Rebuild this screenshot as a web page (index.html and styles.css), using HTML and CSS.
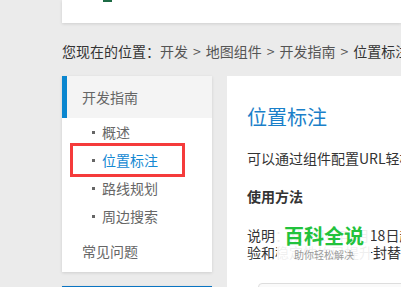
FILE: index.html
```html
<!DOCTYPE html>
<html lang="zh-CN">
<head>
    <meta charset="UTF-8">
    <meta name="viewport" content="width=device-width, initial-scale=1.0">
    <title>位置标注 - 开发指南</title>
    <link rel="stylesheet" href="styles.css">
</head>
<body>
    <div class="page">
        <div class="top-card">
            <span class="logo-mark"></span>
        </div>

        <div class="crumbs">
            您现在的位置：<a href="#">开发</a><span class="sep">&gt;</span><a href="#">地图组件</a><span class="sep">&gt;</span><a href="#">开发指南</a><span class="sep">&gt;</span><span class="here">位置标注</span>
        </div>

        <div class="main">
            <div class="side">
                <div class="side-box">
                    <div class="side-title">开发指南</div>
                    <ul class="side-list">
                        <li>概述</li>
                        <li class="active">位置标注</li>
                        <li>路线规划</li>
                        <li>周边搜索</li>
                    </ul>
                    <div class="side-title plain">常见问题</div>
                    <div class="mark-box"></div>
                </div>
                <div class="side-box next"></div>
            </div>

            <div class="content">
                <h1>位置标注</h1>
                <p>可以通过组件配置URL轻松实现位置标注功能</p>
                <h2>使用方法</h2>
                <p class="note">说明：从2018年1月18日起组件全面升级<br>验和稳定性均已提升封替换旧版接口</p>
                <div class="code"></div>
                <div class="watermark">
                    <div class="wm-big">百科全说</div>
                    <div class="wm-small">助你轻松解决</div>
                </div>
            </div>
        </div>
    </div>
</body>
</html>
```

FILE: styles.css
```css
body {
    margin: 0;
    background-color: #ebebeb;
    font-family: "Noto Sans CJK SC", "Microsoft YaHei", sans-serif;
    font-size: 14px;
    color: #333;
    overflow: hidden;
}
.page {
    padding-left: 62px;
    white-space: nowrap;
}
.top-card {
    height: 23px;
    background-color: #fff;
    box-shadow: 0 1px 3px rgba(0, 0, 0, 0.12);
    position: relative;
}
.logo-mark {
    position: absolute;
    left: 41px;
    top: 0;
    width: 9px;
    height: 2px;
    background-color: #1d6b45;
}
.crumbs {
    margin-top: 18px;
    line-height: 20px;
    color: #333;
}
.crumbs a {
    color: #555;
    text-decoration: none;
}
.crumbs .sep {
    margin: 0 5px;
    color: #555;
}
.crumbs .here {
    color: #333;
}
.main {
    display: flex;
    gap: 15px;
    margin-top: 15px;
    align-items: flex-start;
}
.side {
    width: 150px;
    flex-shrink: 0;
}
.side-box {
    background-color: #fff;
    box-shadow: 0 1px 3px rgba(0, 0, 0, 0.12);
    position: relative;
}
.side-box.next {
    margin-top: 14px;
    height: 20px;
    border-top: 3px solid #0a74c2;
}
.side-title {
    height: 42px;
    line-height: 42px;
    padding-left: 15px;
    border-left: 5px solid #0a86cf;
    background-color: #f4f4f4;
    color: #666;
}
.side-title.plain {
    border-left-color: transparent;
    background-color: #fff;
}
.side-list {
    list-style: none;
    margin: 0;
    padding: 0;
}
.side-list li {
    height: 28px;
    line-height: 28px;
    padding-left: 40px;
    color: #666;
    position: relative;
}
.side-list li::before {
    content: "";
    position: absolute;
    left: 30px;
    top: 13px;
    width: 3px;
    height: 3px;
    background-color: #666;
}
.side-list li.active {
    color: #1589d3;
}
.mark-box {
    position: absolute;
    left: 8px;
    top: 67px;
    width: 109px;
    height: 28px;
    border: 3px solid #f53b3b;
}
.content {
    flex: 1;
    min-width: 400px;
    background-color: #fff;
    padding: 28px 20px 0;
    height: 300px;
    position: relative;
}
.content h1 {
    margin: 0;
    font-size: 20px;
    font-weight: normal;
    line-height: 26px;
    color: #1a7fc9;
}
.content p {
    margin: 18px 0 0;
    line-height: 20px;
}
.content h2 {
    margin: 18px 0 0;
    font-size: 14px;
    font-weight: bold;
    line-height: 20px;
}
.content p.note {
    margin-top: 21px;
    line-height: 17px;
}
.code {
    margin: 22px 0 0 11px;
    height: 30px;
    border: 1px solid #ddd;
    border-radius: 4px;
    background-color: #fafafa;
}
.watermark {
    position: absolute;
    left: 50px;
    top: 146px;
    width: 90px;
    padding: 2px 2px 3px;
    text-align: center;
    background-color: rgba(255, 255, 255, 0.92);
}
.wm-big {
    font-size: 20px;
    font-weight: bold;
    line-height: 24px;
    color: #22c23c;
}
.wm-small {
    font-size: 10px;
    line-height: 14px;
    color: #999;
}
```
